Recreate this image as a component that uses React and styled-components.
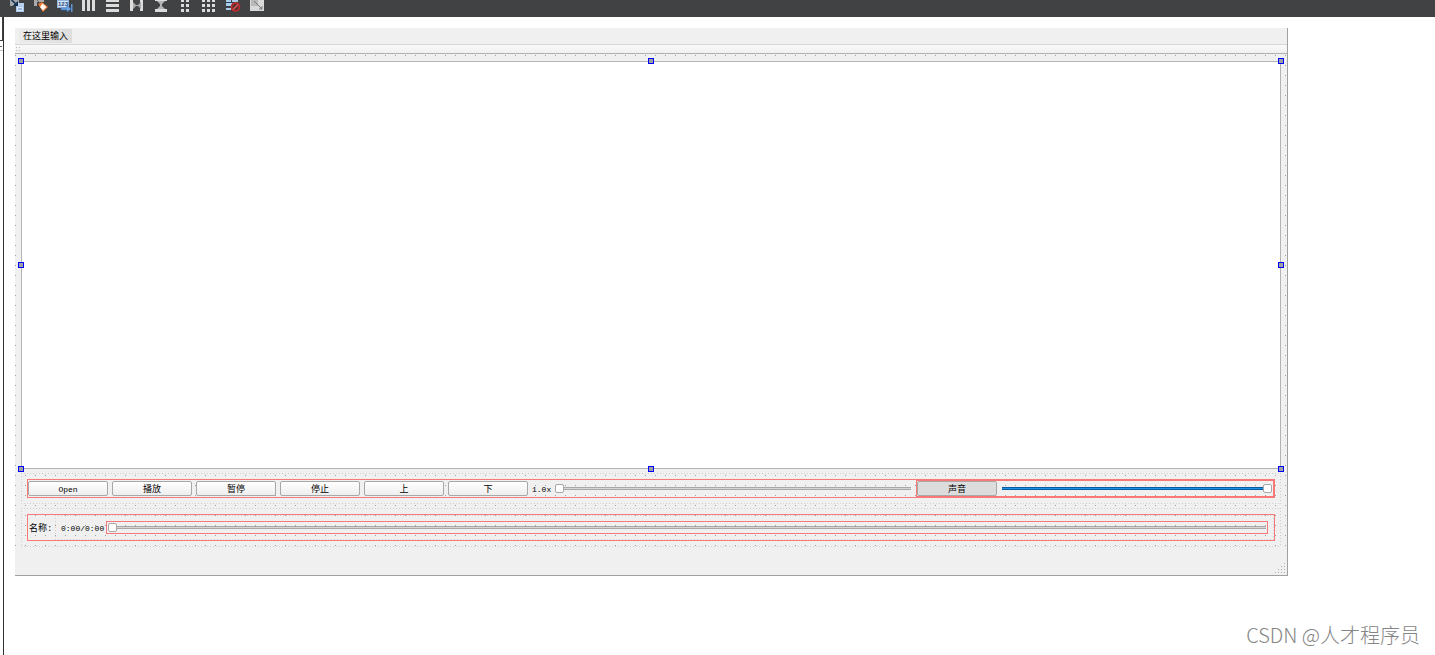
import React, { useState } from "react";
import styled, { createGlobalStyle, css } from "styled-components";

const GlobalStyle = createGlobalStyle`
  * {
    box-sizing: border-box;
  }

  body {
    margin: 0;
    background: #fff;
    color: #000;
    font-family: "Liberation Mono", "Noto Sans CJK SC", monospace;
    font-size: 8px;
  }
`;

const dot = (color) =>
  `conic-gradient(from 270deg at 1px 1px, ${color} 90deg, transparent 0)`;

const dottedFrame = css`
  background-image: ${dot("#d0d0d0")}, ${dot("#d0d0d0")}, ${dot("#d0d0d0")},
    ${dot("#d0d0d0")};
  background-size: 3px 1px, 3px 1px, 1px 3px, 1px 3px;
  background-position: left top, left bottom, left top, right top;
  background-repeat: repeat-x, repeat-x, repeat-y, repeat-y;
`;

const Page = styled.div`
  display: flex;
  flex-direction: column;
  min-height: 100vh;
  overflow: hidden;
`;

const IconBar = styled.header`
  display: flex;
  align-items: flex-start;
  gap: 8px;
  height: 17px;
  padding-left: 9px;
  background: #414244;
`;

const IconButton = styled.button`
  width: 16px;
  height: 12px;
  padding: 0;
  border: 0;
  background: none;

  svg {
    display: block;
  }
`;

const Workspace = styled.div`
  display: flex;
  flex: 1;
`;

const SidePane = styled.aside`
  width: 4px;
  border-right: 1px solid #303030;
`;

const SideTab = styled.div`
  height: 24px;
  border-right: 1px solid #404040;
  border-bottom: 1px solid #404040;
`;

const SideHeader = styled.div`
  height: 10px;
  padding-top: 5px;
  border-bottom: 1px solid #c0c0c0;

  &::before {
    content: "";
    display: block;
    width: 2px;
    height: 1px;
    background: #606060;
  }
`;

const Canvas = styled.main`
  display: flex;
  flex: 1;
  flex-direction: column;
  padding: 11px 147px 79px 11px;
`;

const Form = styled.section`
  display: flex;
  flex: 1;
  flex-direction: column;
  border-right: 1px solid #a0a0a0;
  border-bottom: 1px solid #a0a0a0;
  background: #f0f0f0;
`;

const MenuBar = styled.nav`
  display: flex;
  height: 17px;
  padding: 1px 4px;
  border-bottom: 1px solid #d7d7d7;
`;

const MenuItem = styled.button`
  width: 53px;
  padding: 0;
  border: 0;
  background: linear-gradient(90deg, #ebebeb, #dedede);
  color: #000;
  font: 9px/14px "Noto Sans CJK SC", sans-serif;
  white-space: nowrap;
`;

const ToolStrip = styled.div`
  height: 9px;
  padding: 2px 1px;
  border-bottom: 1px solid #b0b0b0;
  background: linear-gradient(#fafafa, #f0f0f0);

  &::before {
    content: "";
    display: block;
    width: 5px;
    height: 6px;
    background: ${dot("#b8b8b8")} 0 0 / 3px 3px;
  }
`;

const Central = styled.div`
  display: flex;
  flex: 1;
  flex-direction: column;
  gap: 4px;
  padding: 7px 6px 6px;
  background: ${dot("#a0a0a0")} 0 1px / 10px 10px;
`;

const VideoView = styled.div`
  position: relative;
  flex: 1;
  border: 1px solid #b4b4b4;
  background: #fff;
`;

const Handle = styled.span`
  position: absolute;
  top: ${({ $y }) => $y}%;
  left: ${({ $x }) => $x}%;
  width: 6px;
  height: 6px;
  border: 1px solid #0000ff;
  background: #a0a0a4;
  transform: translate(-50%, -50%);
`;

const Handles = styled.div`
  position: absolute;
  inset: -1px;
`;

const Group = styled.div`
  padding: 6px;
  ${dottedFrame}
`;

const LayoutBox = styled.div`
  display: flex;
  align-items: center;
  gap: 4px;
  min-width: 0;
  border: 1px solid #f97878;
`;

const ControlRow = styled(LayoutBox)`
  height: 19px;
`;

const VolumeBox = styled(LayoutBox)`
  flex: 1 1 0;
  height: 17px;
`;

const InfoRow = styled(LayoutBox)`
  height: 27px;
  padding-left: 1px;
`;

const TimeGroup = styled.div`
  display: flex;
  flex: 1;
  align-items: center;
  gap: 4px;
  height: 25px;
  padding: 0 6px;
  ${dottedFrame}
`;

const PositionBox = styled(LayoutBox)`
  flex: 1;
  height: 13px;
`;

const PushButton = styled.button`
  flex: none;
  width: 80px;
  height: 15px;
  padding: 3px 0 0;
  border: 1px solid #a8a8a8;
  border-radius: 2px;
  background: ${({ $flat }) =>
    $flat ? "#dcdcdc" : "linear-gradient(#ffffff, #eeeeee)"};
  color: #000;
  font-family: inherit;
  font-size: ${({ $latin }) => ($latin ? 8 : 9)}px;
  line-height: 10px;
`;

const Label = styled.label`
  flex: none;
  width: ${({ $width }) => $width}px;
  padding-top: 3px;
  font-size: ${({ $cjk }) => ($cjk ? 9 : 8)}px;
  line-height: 12px;
  white-space: nowrap;
`;

const track = css`
  height: 3px;
  border-top: 1px solid ${({ $filled }) => ($filled ? "#0a5a9c" : "#a8a8a8")};
  border-bottom: 1px solid ${({ $filled }) => ($filled ? "#0a5a9c" : "#a8a8a8")};
  background: ${({ $filled }) => ($filled ? "#1e90ea" : "#d6d6d6")};
`;

const Slider = styled.input.attrs({ type: "range" })`
  flex: 1 1 0;
  min-width: 0;
  height: 11px;
  margin: 0 1px;
  appearance: none;
  background: none;

  &::-webkit-slider-runnable-track {
    ${track}
  }

  &::-webkit-slider-thumb {
    appearance: none;
    width: 9px;
    height: 9px;
    margin-top: -4px;
    border: 1px solid #a8a8a8;
    border-radius: 2px;
    background: #fff;
  }
`;

const StatusBar = styled.footer`
  display: flex;
  align-items: flex-end;
  justify-content: flex-end;
  height: 22px;
  padding: 2px;
`;

const Watermark = styled.div`
  position: absolute;
  right: 15px;
  bottom: 5px;
  color: #858585;
  font: 300 20px/30px "Noto Sans CJK SC", sans-serif;
  white-space: nowrap;
`;

const Cells = ({ xs, ys, w, h }) =>
  xs.map((x) =>
    ys.map((y) => (
      <rect key={`${x}-${y}`} x={x} y={y} width={w} height={h} fill="#dcdcdc" />
    ))
  );

const icons = [
  {
    name: "Edit Widgets",
    art: (
      <>
        <path d="M1 0h9v6H1z" fill="#a4a8ae" />
        <path d="M2.500 0l5 4.500" stroke="#14314f" strokeWidth="1.600" />
        <path d="M9 1v5H3.500z" fill="#14314f" />
        <path d="M9 3h6v3H9z" fill="#b9d0ee" />
        <path d="M7 6h8v6H7z" fill="#a9c6ee" />
        <path d="M8 7h6v4H8z" fill="#dbe8fa" />
        <path d="M9 8.500h4v1H9z" fill="#5b83bd" />
      </>
    ),
  },
  {
    name: "Edit Signals/Slots",
    art: (
      <>
        <path d="M1 0h10v2H1zM1 2h3v4H1z" fill="#aaa" />
        <path d="M4 0l5 5" stroke="#666" />
        <path d="M5 4l4-2 6 5-5 5z" fill="#ed7830" />
        <path d="M9.500 3.500L13.500 7 10 10.500 7 7z" fill="#fff6ef" />
      </>
    ),
  },
  {
    name: "Edit Tab Order",
    art: (
      <>
        <path d="M0 0h12v8H0z" fill="#8fb4e0" />
        <path d="M1 1h10v6H1z" fill="#d6e6f8" />
        <text
          x="1"
          y="6"
          fontSize="6"
          fontWeight="700"
          fontFamily="Liberation Sans, sans-serif"
          fill="#1f477f"
        >
          123
        </text>
        <path d="M4 8h6V5l4 4-4 3v-2H4z" fill="#6fa4e2" stroke="#2f65a8" strokeWidth=".5" />
        <path d="M14 4h1.500v8H14z" fill="#5e94d3" />
      </>
    ),
  },
  {
    name: "Lay Out Horizontally",
    art: <Cells xs={[1, 6, 11]} ys={[0]} w={3} h={11} />,
  },
  {
    name: "Lay Out Vertically",
    art: <Cells xs={[1]} ys={[-1, 4, 9]} w={13} h={3} />,
  },
  {
    name: "Lay Out Horizontally in Splitter",
    art: (
      <>
        <Cells xs={[1, 11]} ys={[0]} w={3} h={11} />
        <path d="M4 2l3 3h2l3-3v7L9 6H7L4 9z" fill="#a8a8a8" />
      </>
    ),
  },
  {
    name: "Lay Out Vertically in Splitter",
    art: (
      <>
        <Cells xs={[2]} ys={[-2, 9]} w={12} h={3} />
        <path d="M4 1h8L9 4v2l3 3H4l3-3V4z" fill="#b4b4b4" />
      </>
    ),
  },
  {
    name: "Lay Out in a Form Layout",
    art: <Cells xs={[4, 9]} ys={[-1, 4, 9]} w={3} h={3} />,
  },
  {
    name: "Lay Out in a Grid",
    art: <Cells xs={[1, 6, 11]} ys={[-1, 4, 9]} w={3} h={3} />,
  },
  {
    name: "Break Layout",
    art: (
      <>
        <path d="M1 0h5v2H1zM7 0h6v2H7zM1 3h6v3H1zM1 8h5v2H1z" fill="#a9cde6" />
        <path d="M1 2h7v1H1zM1 6h5v1H1z" fill="#253e5c" />
        <circle cx="10.5" cy="7" r="4" fill="#5c3030" stroke="#c52a2c" strokeWidth="1.6" />
        <path d="M8 9.500l5-5" stroke="#df5555" strokeWidth="1.500" />
      </>
    ),
  },
  {
    name: "Adjust Size",
    art: (
      <>
        <path d="M1 0h14v11H1z" fill="#d9d9d9" />
        <path d="M2 0h7v6H2z" fill="#b8b8b8" />
        <path d="M5 1l8 8M13 6v3h-3" fill="none" stroke="#777" />
      </>
    ),
  },
];

const transport = ["Open", "播放", "暂停", "停止", "上", "下"];

const handlePoints = [
  [0, 0],
  [50, 0],
  [100, 0],
  [0, 50],
  [100, 50],
  [0, 100],
  [50, 100],
  [100, 100],
];

const gripDots = [
  [9, 0],
  [6, 3],
  [9, 3],
  [3, 6],
  [6, 6],
  [9, 6],
  [0, 9],
  [3, 9],
  [6, 9],
  [9, 9],
];

const App = () => {
  const [speed, setSpeed] = useState(0);
  const [volume, setVolume] = useState(100);
  const [position, setPosition] = useState(0);

  return (
    <Page>
      <GlobalStyle />
      <IconBar>
        {icons.map(({ name, art }) => (
          <IconButton key={name} type="button" aria-label={name}>
            <svg width="16" height="12" viewBox="0 0 16 12">
              {art}
            </svg>
          </IconButton>
        ))}
      </IconBar>
      <Workspace>
        <SidePane>
          <SideTab />
          <SideHeader />
        </SidePane>
        <Canvas>
          <Form>
            <MenuBar>
              <MenuItem type="button">在这里输入</MenuItem>
            </MenuBar>
            <ToolStrip />
            <Central>
              <VideoView>
                <Handles>
                  {handlePoints.map(([x, y]) => (
                    <Handle key={`${x}-${y}`} $x={x} $y={y} />
                  ))}
                </Handles>
              </VideoView>
              <Group>
                <ControlRow>
                  {transport.map((text) => (
                    <PushButton key={text} type="button" $latin={text === "Open"}>
                      {text}
                    </PushButton>
                  ))}
                  <Label htmlFor="speed" $width={18}>
                    1.0x
                  </Label>
                  <Slider
                    id="speed"
                    value={speed}
                    onChange={(e) => setSpeed(+e.target.value)}
                  />
                  <VolumeBox>
                    <PushButton type="button" $flat>
                      声音
                    </PushButton>
                    <Slider
                      aria-label="声音"
                      $filled
                      value={volume}
                      onChange={(e) => setVolume(+e.target.value)}
                    />
                  </VolumeBox>
                </ControlRow>
              </Group>
              <Group>
                <InfoRow>
                  <Label $width={22} $cjk htmlFor="position">
                    名称:
                  </Label>
                  <TimeGroup>
                    <Label $width={41} htmlFor="position">
                      0:00/0:00
                    </Label>
                    <PositionBox>
                      <Slider
                        id="position"
                        value={position}
                        onChange={(e) => setPosition(+e.target.value)}
                      />
                    </PositionBox>
                  </TimeGroup>
                </InfoRow>
              </Group>
            </Central>
            <StatusBar>
              <svg width="10" height="10" viewBox="0 0 10 10">
                {gripDots.map(([x, y]) => (
                  <rect key={`${x}-${y}`} x={x} y={y} width="1" height="1" fill="#b0b0b0" />
                ))}
              </svg>
            </StatusBar>
          </Form>
        </Canvas>
      </Workspace>
      <Watermark>CSDN @人才程序员</Watermark>
    </Page>
  );
};

export default App;
